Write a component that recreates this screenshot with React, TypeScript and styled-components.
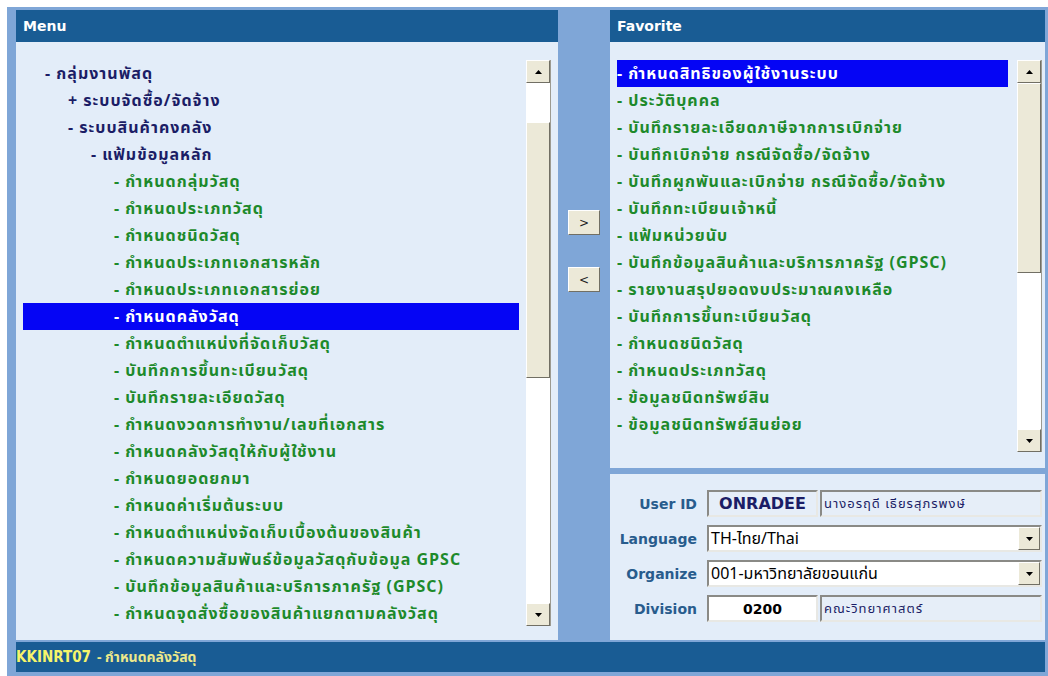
import styled, { createGlobalStyle } from "styled-components";

interface MenuItem {
  label: string;
  level: number;
  kind: "group" | "form";
}

const menuItems: MenuItem[] = [
  { label: "- กลุ่มงานพัสดุ", level: 0, kind: "group" },
  { label: "+ ระบบจัดซื้อ/จัดจ้าง", level: 1, kind: "group" },
  { label: "- ระบบสินค้าคงคลัง", level: 1, kind: "group" },
  { label: "- แฟ้มข้อมูลหลัก", level: 2, kind: "group" },
  { label: "- กำหนดกลุ่มวัสดุ", level: 3, kind: "form" },
  { label: "- กำหนดประเภทวัสดุ", level: 3, kind: "form" },
  { label: "- กำหนดชนิดวัสดุ", level: 3, kind: "form" },
  { label: "- กำหนดประเภทเอกสารหลัก", level: 3, kind: "form" },
  { label: "- กำหนดประเภทเอกสารย่อย", level: 3, kind: "form" },
  { label: "- กำหนดคลังวัสดุ", level: 3, kind: "form" },
  { label: "- กำหนดตำแหน่งที่จัดเก็บวัสดุ", level: 3, kind: "form" },
  { label: "- บันทึกการขึ้นทะเบียนวัสดุ", level: 3, kind: "form" },
  { label: "- บันทึกรายละเอียดวัสดุ", level: 3, kind: "form" },
  { label: "- กำหนดงวดการทำงาน/เลขที่เอกสาร", level: 3, kind: "form" },
  { label: "- กำหนดคลังวัสดุให้กับผู้ใช้งาน", level: 3, kind: "form" },
  { label: "- กำหนดยอดยกมา", level: 3, kind: "form" },
  { label: "- กำหนดค่าเริ่มต้นระบบ", level: 3, kind: "form" },
  { label: "- กำหนดตำแหน่งจัดเก็บเบื้องต้นของสินค้า", level: 3, kind: "form" },
  { label: "- กำหนดความสัมพันธ์ข้อมูลวัสดุกับข้อมูล GPSC", level: 3, kind: "form" },
  { label: "- บันทึกข้อมูลสินค้าและบริการภาครัฐ (GPSC)", level: 3, kind: "form" },
  { label: "- กำหนดจุดสั่งซื้อของสินค้าแยกตามคลังวัสดุ", level: 3, kind: "form" },
];

const favorites: string[] = [
  "- กำหนดสิทธิของผู้ใช้งานระบบ",
  "- ประวัติบุคคล",
  "- บันทึกรายละเอียดภาษีจากการเบิกจ่าย",
  "- บันทึกเบิกจ่าย กรณีจัดซื้อ/จัดจ้าง",
  "- บันทึกผูกพันและเบิกจ่าย กรณีจัดซื้อ/จัดจ้าง",
  "- บันทึกทะเบียนเจ้าหนี้",
  "- แฟ้มหน่วยนับ",
  "- บันทึกข้อมูลสินค้าและบริการภาครัฐ (GPSC)",
  "- รายงานสรุปยอดงบประมาณคงเหลือ",
  "- บันทึกการขึ้นทะเบียนวัสดุ",
  "- กำหนดชนิดวัสดุ",
  "- กำหนดประเภทวัสดุ",
  "- ข้อมูลชนิดทรัพย์สิน",
  "- ข้อมูลชนิดทรัพย์สินย่อย",
];

const selectedMenu = 9;
const selectedFavorite = 0;

const GlobalStyle = createGlobalStyle`
  body {
    margin: 0;
    background: #ffffff;
    font-family: Tahoma, "Noto Sans Thai", "Noto Sans", "DejaVu Sans", sans-serif;
  }
`;

function Arrow({ dir }: { dir: "up" | "down" }) {
  return (
    <svg width="7" height="4" viewBox="0 0 7 4">
      {dir === "up" ? (
        <polygon points="3.5,0 7,4 0,4" fill="#000" />
      ) : (
        <polygon points="0,0 7,0 3.5,4" fill="#000" />
      )}
    </svg>
  );
}

function ScrollBar({ before, thumb }: { before: number; thumb: number }) {
  return (
    <Scroll>
      <ScrollButton>
        <Arrow dir="up" />
      </ScrollButton>
      <Track>
        <div style={{ height: before }} />
        <Thumb style={{ height: thumb }} />
      </Track>
      <ScrollButton>
        <Arrow dir="down" />
      </ScrollButton>
    </Scroll>
  );
}

export default function App() {
  return (
    <>
      <GlobalStyle />
      <Frame>
        <TopRow>
          <Column>
            <Header>Menu</Header>
            <MenuBody>
              <List>
                {menuItems.map((item, i) => (
                  <Row
                    key={item.label}
                    $indent={22 + item.level * 23}
                    $kind={item.kind}
                    $selected={i === selectedMenu}
                  >
                    {item.label}
                  </Row>
                ))}
              </List>
              <ScrollBar before={39} thumb={256} />
            </MenuBody>
          </Column>

          <Middle>
            <MoveButton>&gt;</MoveButton>
            <MoveButton>&lt;</MoveButton>
          </Middle>

          <Column>
            <Header>Favorite</Header>
            <FavBody>
              <FavList>
                {favorites.map((label, i) => (
                  <Row key={label} $indent={0} $kind="form" $selected={i === selectedFavorite}>
                    {label}
                  </Row>
                ))}
              </FavList>
              <ScrollBar before={0} thumb={190} />
            </FavBody>
            <UserPanel>
              <Label>User ID</Label>
              <Pair>
                <CodeBox>ONRADEE</CodeBox>
                <NameBox>นางอรฤดี เธียรสุภรพงษ์</NameBox>
              </Pair>

              <Label>Language</Label>
              <Select>
                <SelectText>TH-ไทย/Thai</SelectText>
                <DropButton>
                  <Arrow dir="down" />
                </DropButton>
              </Select>

              <Label>Organize</Label>
              <Select>
                <SelectText>001-มหาวิทยาลัยขอนแก่น</SelectText>
                <DropButton>
                  <Arrow dir="down" />
                </DropButton>
              </Select>

              <Label>Division</Label>
              <Pair>
                <CodeBox $white>0200</CodeBox>
                <NameBox>คณะวิทยาศาสตร์</NameBox>
              </Pair>
            </UserPanel>
          </Column>
        </TopRow>
        <StatusBar>
          <StatusCode>KKINRT07</StatusCode>
          <StatusTitle>- กำหนดคลังวัสดุ</StatusTitle>
        </StatusBar>
      </Frame>
    </>
  );
}

const Frame = styled.div`
  margin: 7px 0 0 7px;
  width: 1041px;
  height: 669px;
  box-sizing: border-box;
  padding: 3px 3px 4px 9px;
  background: #7fa6d7;
  display: flex;
  flex-direction: column;
`;

const TopRow = styled.div`
  display: grid;
  grid-template-columns: 542px 52px 1fr;
  height: 630px;
`;

const Column = styled.div`
  display: flex;
  flex-direction: column;
  min-height: 0;
`;

const Header = styled.div`
  height: 32px;
  flex: none;
  background: #195c94;
  color: #ffffff;
  font-family: Tahoma, "DejaVu Sans", sans-serif;
  font-weight: 700;
  font-size: 14px;
  display: flex;
  align-items: center;
  padding-left: 7px;
`;

const MenuBody = styled.div`
  flex: 1;
  background: #e3edf9;
  display: flex;
  gap: 3px;
  padding: 18px 7px 14px 7px;
  min-height: 0;
`;

const List = styled.div`
  flex: 1;
  overflow: hidden;
  padding-right: 4px;
`;

const Row = styled.div<{ $indent: number; $kind: "group" | "form"; $selected: boolean }>`
  height: 27px;
  display: flex;
  align-items: center;
  padding-left: ${(p) => p.$indent}px;
  white-space: nowrap;
  overflow: hidden;
  font-size: 16px;
  letter-spacing: 1px;
  font-weight: 700;
  color: ${(p) => (p.$selected ? "#ffffff" : p.$kind === "group" ? "#1b1d66" : "#1d8a2b")};
  background: ${(p) => (p.$selected ? "#0505f5" : "transparent")};
`;

const Scroll = styled.div`
  width: 24px;
  flex: none;
  display: flex;
  flex-direction: column;
  background: #ffffff;
  border-right: 1px solid #9c9a90;
`;

const ScrollButton = styled.div`
  height: 23px;
  flex: none;
  box-sizing: border-box;
  background: #ece9d8;
  border: 1px solid;
  border-color: #ffffff #716f64 #716f64 #ffffff;
  display: flex;
  align-items: center;
  justify-content: center;
`;

const Track = styled.div`
  flex: 1;
  background: #ffffff;
`;

const Thumb = styled.div`
  box-sizing: border-box;
  background: #ece9d8;
  border: 1px solid;
  border-color: #ffffff #716f64 #716f64 #ffffff;
`;

const Middle = styled.div`
  display: flex;
  flex-direction: column;
  gap: 32px;
  padding: 200px 0 0 10px;
`;

const MoveButton = styled.div`
  width: 32px;
  height: 25px;
  box-sizing: border-box;
  background: #ece9d8;
  border: 1px solid;
  border-color: #ffffff #716f64 #716f64 #ffffff;
  display: flex;
  align-items: center;
  justify-content: center;
  font-family: "DejaVu Sans", sans-serif;
  font-size: 12px;
  color: #222;
`;

const FavBody = styled.div`
  height: 426px;
  flex: none;
  box-sizing: border-box;
  background: #e3edf9;
  display: flex;
  gap: 9px;
  padding: 18px 3px 16px 7px;
`;

const FavList = styled.div`
  flex: 1;
  overflow: hidden;
`;

const UserPanel = styled.div`
  flex: 1;
  margin-top: 6px;
  background: #e3edf9;
  display: grid;
  grid-template-columns: 87px 1fr;
  grid-auto-rows: 27px;
  column-gap: 10px;
  row-gap: 8px;
  align-content: start;
  padding: 16px 3px 0 0;
`;

const Label = styled.div`
  display: flex;
  align-items: center;
  justify-content: flex-end;
  font-family: Tahoma, "DejaVu Sans", sans-serif;
  font-weight: 700;
  font-size: 14px;
  color: #285c8d;
  white-space: nowrap;
`;

const Pair = styled.div`
  display: grid;
  grid-template-columns: 111px 1fr;
  gap: 2px;
`;

const Sunken = styled.div`
  box-sizing: border-box;
  border: 2px solid;
  border-color: #8a8a86 #e8e8e4 #e8e8e4 #8a8a86;
  display: flex;
  align-items: center;
  overflow: hidden;
  white-space: nowrap;
`;

const CodeBox = styled(Sunken)<{ $white?: boolean }>`
  justify-content: center;
  background: ${(p) => (p.$white ? "#ffffff" : "#e6eef8")};
  color: ${(p) => (p.$white ? "#000000" : "#1b1d66")};
  font-family: Tahoma, "DejaVu Sans", sans-serif;
  font-weight: 700;
  font-size: ${(p) => (p.$white ? 14 : 16)}px;
`;

const NameBox = styled(Sunken)`
  background: #e6eef8;
  color: #1b1d66;
  font-size: 13px;
  letter-spacing: 1px;
  padding-left: 2px;
`;

const Select = styled(Sunken)`
  background: #ffffff;
  justify-content: space-between;
`;

const SelectText = styled.span`
  padding-left: 2px;
  font-size: 16px;
  color: #000000;
`;

const DropButton = styled.div`
  width: 22px;
  height: 100%;
  box-sizing: border-box;
  background: #ece9d8;
  border: 1px solid;
  border-color: #ffffff #716f64 #716f64 #ffffff;
  display: flex;
  align-items: center;
  justify-content: center;
`;

const StatusBar = styled.div`
  flex: 1;
  margin-top: 2px;
  background: #195c94;
  display: flex;
  align-items: center;
  gap: 6px;
  font-weight: 700;
  white-space: nowrap;
`;

const StatusCode = styled.span`
  font-family: Tahoma, "DejaVu Sans Condensed", "DejaVu Sans", sans-serif;
  font-size: 15px;
  color: #f6f46a;
`;

const StatusTitle = styled.span`
  font-size: 14px;
  color: #ece88a;
`;
